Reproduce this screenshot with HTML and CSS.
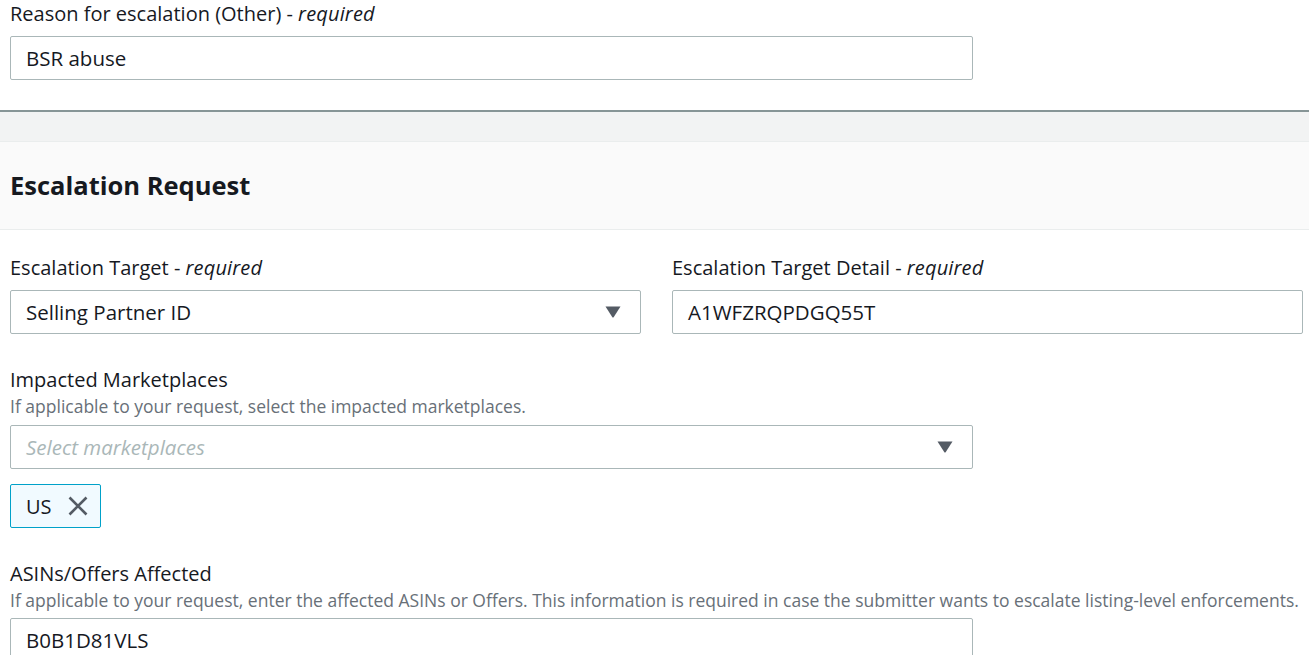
FILE: index.html
```html
<!DOCTYPE html>
<html lang="en">
<head>
<meta charset="utf-8">
<title>Escalation Request</title>
<link rel="stylesheet" href="styles.css">
</head>
<body>
<div class="page">
  <section class="top">
    <div class="field wide">
      <label class="label">Reason for escalation (Other) - <em>required</em></label>
      <div class="control input">BSR abuse</div>
    </div>
  </section>

  <div class="divider"></div>

  <header class="section-header">
    <h2>Escalation Request</h2>
  </header>

  <section class="body">
    <div class="row">
      <div class="field">
        <label class="label">Escalation Target - <em>required</em></label>
        <div class="control select">
          <span>Selling Partner ID</span>
          <svg class="caret" viewBox="0 0 16 12" width="16" height="12"><path d="M0.5 0.5 H15.5 L8.8 11 Q8 12 7.2 11 Z" fill="#545b64"/></svg>
        </div>
      </div>
      <div class="field">
        <label class="label">Escalation Target Detail - <em>required</em></label>
        <div class="control input">A1WFZRQPDGQ55T</div>
      </div>
    </div>

    <div class="field wide">
      <label class="label">Impacted Marketplaces</label>
      <div class="desc">If applicable to your request, select the impacted marketplaces.</div>
      <div class="control select">
        <span class="placeholder">Select marketplaces</span>
        <svg class="caret" viewBox="0 0 16 12" width="16" height="12"><path d="M0.5 0.5 H15.5 L8.8 11 Q8 12 7.2 11 Z" fill="#545b64"/></svg>
      </div>
      <div class="tokens">
        <div class="token">
          <span>US</span>
          <svg class="dismiss" viewBox="0 0 20 20" width="20" height="20"><path d="M1.5 1.5 L18.5 18.5 M18.5 1.5 L1.5 18.5" stroke="#545b64" stroke-width="2.6" fill="none"/></svg>
        </div>
      </div>
    </div>

    <div class="field asins">
      <label class="label">ASINs/Offers Affected</label>
      <div class="desc">If applicable to your request, enter the affected ASINs or Offers. This information is required in case the submitter wants to escalate listing-level enforcements.</div>
      <div class="control input narrow">B0B1D81VLS</div>
    </div>
  </section>
</div>
</body>
</html>
```

FILE: styles.css
```css
* { box-sizing: border-box; }
html, body { margin: 0; padding: 0; background: #ffffff; }
body {
  font-family: "Open Sans", "Liberation Sans", Arial, sans-serif;
  color: #16191f;
  font-size: 20px;
  overflow: hidden;
}
.page { width: 1309px; }

.top { padding: 0 6px 30px 10px; }

.field { display: flex; flex-direction: column; }
.field.wide { width: 963px; }

.label {
  font-size: 20px;
  line-height: 28px;
  color: #16191f;
  margin-bottom: 8px;
}
.label em { font-style: italic; letter-spacing: 0.15px; }

.desc {
  font-size: 17.5px;
  line-height: 22px;
  color: #687078;
  margin-top: -7px;
  margin-bottom: 8px;
  white-space: nowrap;
}

.control {
  height: 44px;
  border: 1px solid #aab7b8;
  border-radius: 2px;
  background: #ffffff;
  display: flex;
  align-items: center;
  padding: 0 15px;
  font-size: 20.5px;
  color: #16191f;
}
.control.narrow { width: 963px; }
.select { justify-content: space-between; padding-right: 19px; }
.placeholder { color: #aab7b8; font-style: italic; }
.caret { display: block; }

.divider {
  height: 2px;
  background: #879596;
  box-shadow: 0 1px 1px rgba(0,28,36,0.25);
}
.section-header {
  margin-top: 0;
  padding-top: 29px;
  background: #f2f3f3;
}
.section-header h2 {
  margin: 0;
  background: #fafafa;
  border-top: 1px solid #eaeded;
  border-bottom: 1px solid #eaeded;
  height: 89px;
  display: flex;
  align-items: center;
  padding: 0 10px 2px;
  font-size: 25.5px;
  font-weight: 700;
  color: #16191f;
}

.body {
  padding: 24px 6px 0 10px;
  display: flex;
  flex-direction: column;
  gap: 32px;
}
.row {
  display: grid;
  grid-template-columns: 631px 631px;
  column-gap: 31px;
}

.tokens { margin-top: 15px; display: flex; }
.token {
  height: 44px;
  border: 1px solid #00a1c9;
  border-radius: 2px;
  background: #f1faff;
  display: flex;
  align-items: center;
  padding: 0 12px 0 15px;
  gap: 16px;
  font-size: 20px;
}
.dismiss { display: block; }
.asins .control { margin-top: -1px; }
```
